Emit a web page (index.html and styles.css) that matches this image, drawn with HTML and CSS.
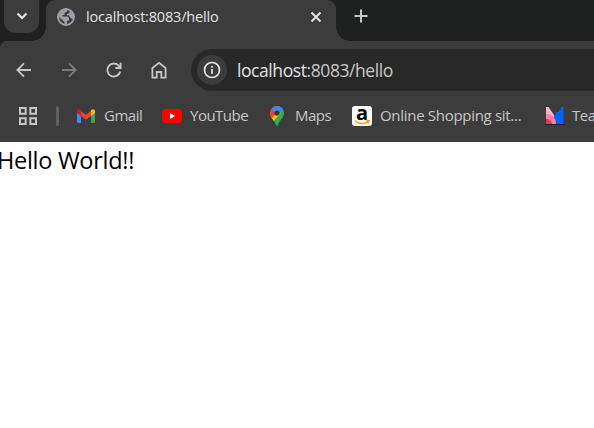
FILE: index.html
```html
<!DOCTYPE html>
<html lang="en">
<head>
<meta charset="utf-8">
<title>localhost:8083/hello</title>
<link rel="stylesheet" href="styles.css">
</head>
<body>
<header class="browser">
  <div class="tabstrip">
    <div class="tab-search"><svg width="12" height="8" viewBox="0 0 12 8"><path d="M1.500 1.500 6 6l4.500-4.500" fill="none" stroke="#e3e3e3" stroke-width="2.200"/></svg></div>
    <div class="tab">
      <svg class="globe" width="18" height="18" viewBox="0 0 18 18"><circle cx="9" cy="9" r="8" fill="#3c3c3c" stroke="#9aa0a6" stroke-width="2"/><path d="M1 7.500C2 3 5 1 10 1v2.500L7.500 5v2H5.500v1.500h5L12 10v2l-2 1.500V17H7.500v-3L2 9ZM12.500 2C16 4 17 6 17 9.500l-1.500 1.500-2-1-1.500-2.500h-2V6l2.500-1Z" fill="#9aa0a6"/></svg>
      <span class="tab-title">localhost:8083/hello</span>
      <svg class="close" width="12" height="12" viewBox="0 0 12 12"><path d="m1.500 1.500 9 9m0-9-9 9" stroke="#e3e3e3" stroke-width="1.900"/></svg>
    </div>
    <svg class="new-tab" width="14" height="14" viewBox="0 0 14 14"><path d="M7 .5v13M.5 7h13" stroke="#c7c7c7" stroke-width="2"/></svg>
  </div>
  <div class="toolbar">
    <nav class="nav">
      <svg width="18" height="18" viewBox="0 0 18 18"><path d="M16 9H2.500M9 2.300 2.300 9 9 15.700" fill="none" stroke="#c7c7c7" stroke-width="1.800"/></svg>
      <svg width="18" height="18" viewBox="0 0 18 18"><path d="M2 9h13.500M9 2.300 15.700 9 9 15.700" fill="none" stroke="#7c7c7c" stroke-width="1.800"/></svg>
      <svg width="18" height="18" viewBox="0 0 18 18"><path d="M15.200 10.500A6.500 6.500 0 1 1 14 5l1.500 2M15.600 1.700V7h-5.300" fill="none" stroke="#c7c7c7" stroke-width="1.900"/></svg>
      <svg width="18" height="18" viewBox="0 0 18 18"><path d="M2.400 16.700V7L9 1.800 15.600 7v9.700h-4.300V11H6.700v5.700Z" fill="none" stroke="#c7c7c7" stroke-width="1.800"/></svg>
    </nav>
    <div class="omnibox">
      <span class="info"><svg width="18" height="18" viewBox="0 0 18 18"><circle cx="9" cy="9" r="7.500" fill="none" stroke="#e3e3e3" stroke-width="1.700"/><path d="M9 8v5M9 5v1.700" stroke="#e3e3e3" stroke-width="1.700"/></svg></span>
      <span class="url"><b>localhost</b>:8083/hello</span>
    </div>
  </div>
  <div class="bookmarks">
    <svg class="apps" width="18" height="18" viewBox="0 0 18 18"><path d="M1 1h5.700v5.700H1zM11.300 1H17v5.700h-5.700zM1 11.300h5.700V17H1zM11.300 11.300H17V17h-5.700z" fill="none" stroke="#c7c7c7" stroke-width="2"/></svg>
    <i class="divider"></i>
    <div class="bookmark gmail">
      <svg width="18" height="14" viewBox="0 0 18 14"><path d="M0 3 4 5v9H1.300Q0 14 0 12.700Z" fill="#4285f4"/><path d="m14 5 4-2v9.700Q18 14 16.700 14H14Z" fill="#34a853"/><path d="m4 2 5 3.800L14 2v5l-5 3.800L4 7Z" fill="#ea4335"/><path d="M0 4V2.200C0 .2 2.200-.5 4 1v6Z" fill="#c5221f"/><path d="M14 7V1c1.800-1.500 4-.8 4 1.200V4Z" fill="#fbbc04"/></svg>
      <span>Gmail</span>
    </div>
    <div class="bookmark youtube">
      <svg width="20" height="14" viewBox="0 0 20 14"><rect width="20" height="14" rx="3.500" fill="#f00"/><path d="m8 4 5 3-5 3Z" fill="#fff"/></svg>
      <span>YouTube</span>
    </div>
    <div class="bookmark maps">
      <svg width="14" height="20" viewBox="0 0 14 20"><defs><clipPath id="pin"><path d="M7 0a7 7 0 0 1 7 7c0 5-4.500 7-6 12q-.3 1-1 1t-1-1C4.500 14 0 12 0 7a7 7 0 0 1 7-7Z"/></clipPath></defs><g clip-path="url(#pin)"><path d="M0 0h14v20H0z" fill="#34a853"/><path d="m0 12 7-7 4 2-8 9H0Z" fill="#fbbc04"/><path d="M0 2 7 6.500 1 13H0Z" fill="#ea4335"/><path d="M1.500 2 4 0h9l.5 4L7 9Z" fill="#4285f4"/></g><circle cx="7" cy="7" r="2.600" fill="#343638"/></svg>
      <span>Maps</span>
    </div>
    <div class="bookmark shop">
      <span class="amazon"><b>a</b><svg width="16" height="5" viewBox="0 0 16 5"><path d="M1 .8Q7.500 6 14 1.800M12 .8l3-.2-.8 2.600" fill="none" stroke="#f90" stroke-width="1.300"/></svg></span>
      <span>Online Shopping sit...</span>
    </div>
    <div class="bookmark team">
      <svg width="20" height="18" viewBox="0 0 20 18"><path d="M1 0h2.500l5.500 8v9H1Z" fill="#ffb3c7"/><path d="M18.500 0v17H9V8h2V5h3V3h2V0Z" fill="#0061ff"/><path d="M1 7c6 0 10 4 10 10H1Z" fill="#ff80a8"/><path d="M1 12q5 0 6 5H1Z" fill="#ff3038"/><path d="M0 17.500h20" stroke="#202020"/></svg>
      <span>Tea</span>
    </div>
  </div>
</header>
<main class="page">Hello World!!</main>
</body>
</html>
```
FILE: styles.css
```css
* { box-sizing: border-box; }
body { margin: 0; height: 428px; overflow: hidden; background: #fff; font-family: "Open Sans", "Noto Sans", sans-serif; }
svg { display: block; flex: none; }
.browser { background: #3c3c3c; height: 142px; white-space: nowrap; }
.tabstrip { display: flex; height: 41px; background: #1f2120; padding-left: 4px; }
.tab-search { position: relative; z-index: 1; width: 35px; height: 33px; border-radius: 0 0 12px 12px; background: #3c3c3c; display: flex; justify-content: center; padding-top: 12px; }
.tab { position: relative; display: flex; align-items: center; width: 290px; height: 41px; margin-left: 7px; padding: 0 14px 8px 11px; background: #3c3c3c; border-radius: 9px 9px 0 0; }
.tab::before, .tab::after { content: ""; position: absolute; bottom: 0; width: 14px; height: 14px; }
.tab::before { left: -14px; background: radial-gradient(circle at 0 0, #1f2120 13.5px, #3c3c3c 14px); }
.tab::after { right: -14px; background: radial-gradient(circle at 100% 0, #1f2120 13.5px, #3c3c3c 14px); }
.tab-title { margin-left: 11px; font-size: 14.5px; letter-spacing: -0.18px; color: #e3e3e3; }
.close { margin-left: auto; }
.new-tab { margin: 9px 0 0 18px; }
.toolbar { display: flex; align-items: center; height: 58px; padding-left: 15px; background: radial-gradient(circle at 8px 8px, #3c3c3c 8px, #1f2120 8.5px) 0 0 / 8px 8px no-repeat; }
.nav { display: flex; gap: 27px; width: 176px; }
.omnibox { display: flex; align-items: center; flex: 1; height: 42px; border-radius: 21px 0 0 21px; background: #282828; padding-left: 6px; }
.info { width: 30px; height: 30px; border-radius: 50%; background: #3c3c3c; display: flex; align-items: center; justify-content: center; }
.url { margin-left: 10px; font-size: 17.5px; letter-spacing: -0.42px; color: #c7c7c7; }
.url b { font-weight: 400; color: #e3e3e3; }
.bookmarks { display: flex; align-items: center; height: 34px; padding-left: 19px; }
.divider { flex: none; width: 3px; height: 20px; border-radius: 2px; background: #5e5e5e; margin: 0 18px 0 19px; }
.bookmark { display: flex; align-items: center; flex: none; color: #c7c7c7; font-size: 15px; letter-spacing: -0.5px; }
.bookmark > span:last-child { margin-top: -2px; }
.gmail { gap: 9px; width: 85px; }
.youtube { gap: 8px; width: 108px; }
.maps { gap: 11px; width: 82px; }
.shop { gap: 8px; width: 193px; letter-spacing: -0.3px; }
.team { gap: 7px; }
.amazon { position: relative; width: 20px; height: 20px; border-radius: 3px; background: #fff; color: #000; text-align: center; }
.amazon b { display: block; font-size: 20px; line-height: 13px; letter-spacing: 0; }
.amazon svg { position: absolute; left: 2px; bottom: 1px; }
.page { margin-left: -3px; padding-top: 1px; font-size: 23.5px; line-height: 34px; letter-spacing: -0.28px; color: #000; }
```
